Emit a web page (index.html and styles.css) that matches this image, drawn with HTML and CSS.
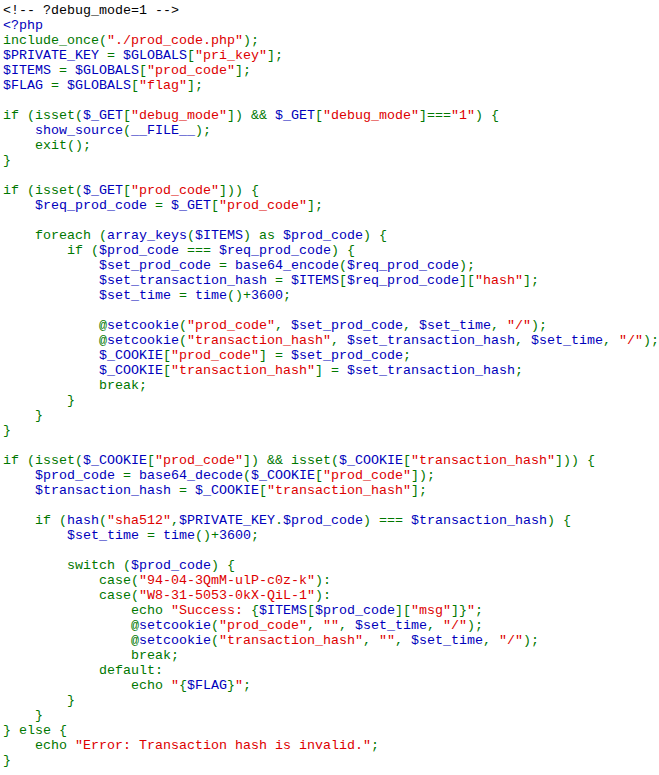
FILE: index.html
```html
<!DOCTYPE html>
<html>
<head>
<meta charset="utf-8">
<link rel="stylesheet" href="styles.css">
</head>
<body>
<code class="src"><span class="h">&lt;!-- ?debug_mode=1 --&gt;</span>
<span class="b">&lt;?php</span>
<span class="g">include_once(</span><span class="r">"./prod_code.php"</span><span class="g">);</span>
<span class="b">$PRIVATE_KEY </span><span class="g">= </span><span class="b">$GLOBALS</span><span class="g">[</span><span class="r">"pri_key"</span><span class="g">];</span>
<span class="b">$ITEMS </span><span class="g">= </span><span class="b">$GLOBALS</span><span class="g">[</span><span class="r">"prod_code"</span><span class="g">];</span>
<span class="b">$FLAG </span><span class="g">= </span><span class="b">$GLOBALS</span><span class="g">[</span><span class="r">"flag"</span><span class="g">];</span>

<span class="g">if (isset(</span><span class="b">$_GET</span><span class="g">[</span><span class="r">"debug_mode"</span><span class="g">]) &amp;&amp; </span><span class="b">$_GET</span><span class="g">[</span><span class="r">"debug_mode"</span><span class="g">]===</span><span class="r">"1"</span><span class="g">) {</span>
    <span class="b">show_source</span><span class="g">(</span><span class="b">__FILE__</span><span class="g">);</span>
<span class="g">    exit();</span>
<span class="g">}</span>

<span class="g">if (isset(</span><span class="b">$_GET</span><span class="g">[</span><span class="r">"prod_code"</span><span class="g">])) {</span>
    <span class="b">$req_prod_code </span><span class="g">= </span><span class="b">$_GET</span><span class="g">[</span><span class="r">"prod_code"</span><span class="g">];</span>

<span class="g">    foreach (</span><span class="b">array_keys</span><span class="g">(</span><span class="b">$ITEMS</span><span class="g">) as </span><span class="b">$prod_code</span><span class="g">) {</span>
<span class="g">        if (</span><span class="b">$prod_code </span><span class="g">=== </span><span class="b">$req_prod_code</span><span class="g">) {</span>
            <span class="b">$set_prod_code </span><span class="g">= </span><span class="b">base64_encode</span><span class="g">(</span><span class="b">$req_prod_code</span><span class="g">);</span>
            <span class="b">$set_transaction_hash </span><span class="g">= </span><span class="b">$ITEMS</span><span class="g">[</span><span class="b">$req_prod_code</span><span class="g">][</span><span class="r">"hash"</span><span class="g">];</span>
            <span class="b">$set_time </span><span class="g">= </span><span class="b">time</span><span class="g">()+</span><span class="b">3600</span><span class="g">;</span>

<span class="g">            @</span><span class="b">setcookie</span><span class="g">(</span><span class="r">"prod_code"</span><span class="g">, </span><span class="b">$set_prod_code</span><span class="g">, </span><span class="b">$set_time</span><span class="g">, </span><span class="r">"/"</span><span class="g">);</span>
<span class="g">            @</span><span class="b">setcookie</span><span class="g">(</span><span class="r">"transaction_hash"</span><span class="g">, </span><span class="b">$set_transaction_hash</span><span class="g">, </span><span class="b">$set_time</span><span class="g">, </span><span class="r">"/"</span><span class="g">);</span>
            <span class="b">$_COOKIE</span><span class="g">[</span><span class="r">"prod_code"</span><span class="g">] = </span><span class="b">$set_prod_code</span><span class="g">;</span>
            <span class="b">$_COOKIE</span><span class="g">[</span><span class="r">"transaction_hash"</span><span class="g">] = </span><span class="b">$set_transaction_hash</span><span class="g">;</span>
<span class="g">            break;</span>
<span class="g">        }</span>
<span class="g">    }</span>
<span class="g">}</span>

<span class="g">if (isset(</span><span class="b">$_COOKIE</span><span class="g">[</span><span class="r">"prod_code"</span><span class="g">]) &amp;&amp; isset(</span><span class="b">$_COOKIE</span><span class="g">[</span><span class="r">"transaction_hash"</span><span class="g">])) {</span>
    <span class="b">$prod_code </span><span class="g">= </span><span class="b">base64_decode</span><span class="g">(</span><span class="b">$_COOKIE</span><span class="g">[</span><span class="r">"prod_code"</span><span class="g">]);</span>
    <span class="b">$transaction_hash </span><span class="g">= </span><span class="b">$_COOKIE</span><span class="g">[</span><span class="r">"transaction_hash"</span><span class="g">];</span>

<span class="g">    if (</span><span class="b">hash</span><span class="g">(</span><span class="r">"sha512"</span><span class="g">,</span><span class="b">$PRIVATE_KEY</span><span class="g">.</span><span class="b">$prod_code</span><span class="g">) === </span><span class="b">$transaction_hash</span><span class="g">) {</span>
        <span class="b">$set_time </span><span class="g">= </span><span class="b">time</span><span class="g">()+</span><span class="b">3600</span><span class="g">;</span>

<span class="g">        switch (</span><span class="b">$prod_code</span><span class="g">) {</span>
<span class="g">            case(</span><span class="r">"94-04-3QmM-ulP-c0z-k"</span><span class="g">):</span>
<span class="g">            case(</span><span class="r">"W8-31-5053-0kX-QiL-1"</span><span class="g">):</span>
<span class="g">                echo </span><span class="r">"Success: </span><span class="g">{</span><span class="b">$ITEMS</span><span class="g">[</span><span class="b">$prod_code</span><span class="g">][</span><span class="r">"msg"</span><span class="g">]}</span><span class="r">"</span><span class="g">;</span>
<span class="g">                @</span><span class="b">setcookie</span><span class="g">(</span><span class="r">"prod_code"</span><span class="g">, </span><span class="r">""</span><span class="g">, </span><span class="b">$set_time</span><span class="g">, </span><span class="r">"/"</span><span class="g">);</span>
<span class="g">                @</span><span class="b">setcookie</span><span class="g">(</span><span class="r">"transaction_hash"</span><span class="g">, </span><span class="r">""</span><span class="g">, </span><span class="b">$set_time</span><span class="g">, </span><span class="r">"/"</span><span class="g">);</span>
<span class="g">                break;</span>
<span class="g">            default:</span>
<span class="g">                echo </span><span class="r">"</span><span class="g">{</span><span class="b">$FLAG</span><span class="g">}</span><span class="r">"</span><span class="g">;</span>
<span class="g">        }</span>
<span class="g">    }</span>
<span class="g">} else {</span>
<span class="g">    echo </span><span class="r">"Error: Transaction hash is invalid."</span><span class="g">;</span>
<span class="g">}</span></code>
</body>
</html>
```
FILE: styles.css
```css
html, body {
  margin: 0;
  padding: 0;
  background: #ffffff;
}
.src {
  display: block;
  white-space: pre;
  font-family: "Liberation Mono", "Courier New", monospace;
  font-size: 13.333px;
  line-height: 15px;
  padding: 3px 0 0 3px;
  color: #000000;
}
.h { color: #000000; }
.b { color: #0000BB; }
.g { color: #007700; }
.r { color: #DD0000; }
```
